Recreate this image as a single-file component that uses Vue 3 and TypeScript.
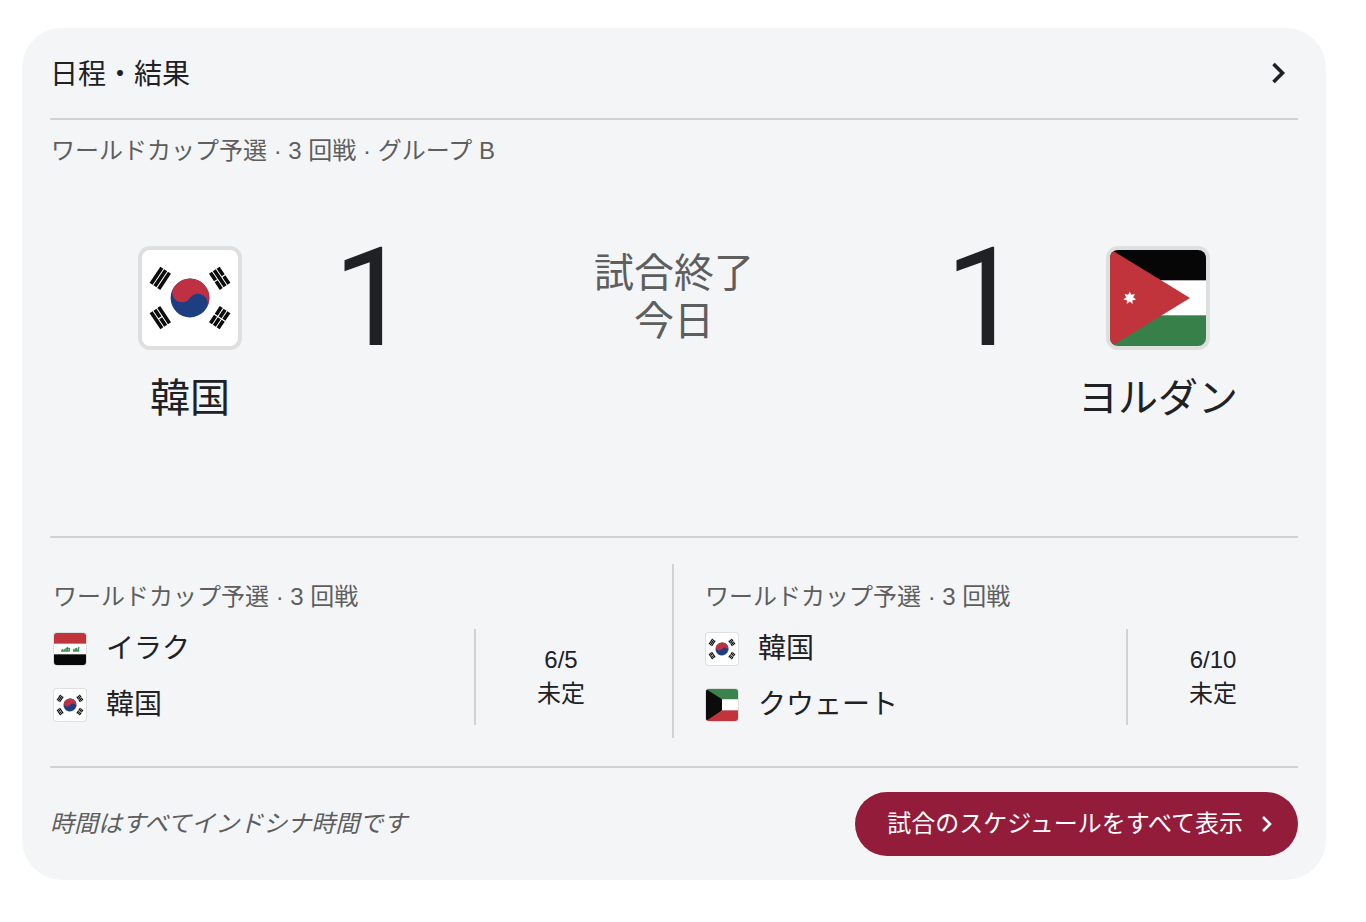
<script setup lang="ts">
import { defineComponent, h } from 'vue'

type Country = 'kr' | 'jo' | 'iq' | 'kw'

interface Team {
  name: string
  flag: Country
}

interface Fixture {
  id: number
  stage: string
  teams: Team[]
  date: string
  time: string
}

const korea: Team = { name: '韓国', flag: 'kr' }
const jordan: Team = { name: 'ヨルダン', flag: 'jo' }

const fixtures: Fixture[] = [
  {
    id: 1,
    stage: 'ワールドカップ予選 · 3 回戦',
    teams: [{ name: 'イラク', flag: 'iq' }, korea],
    date: '6/5',
    time: '未定',
  },
  {
    id: 2,
    stage: 'ワールドカップ予選 · 3 回戦',
    teams: [korea, { name: 'クウェート', flag: 'kw' }],
    date: '6/10',
    time: '未定',
  },
]

const rect = (x: number, y: number, width: number, height: number, fill: string) =>
  h('rect', { x, y, width, height, fill })

// One trigram: three bars, each either whole (1) or split (0).
const trigram = (x: number, y: number, angle: number, bars: number[]) =>
  h(
    'g',
    { transform: `translate(${x} ${y}) rotate(${angle})` },
    bars.flatMap((whole, i) => {
      const top = -6.4 + i * 4.6
      return whole
        ? [rect(-9.7, top, 19.4, 3.6, '#0c0c0c')]
        : [rect(-9.7, top, 9.1, 3.6, '#0c0c0c'), rect(0.6, top, 9.1, 3.6, '#0c0c0c')]
    }),
  )

const starPoints = Array.from({ length: 14 }, (_, i) => {
  const r = i % 2 === 0 ? 6.6 : 3.6
  const a = (i * Math.PI) / 7 - Math.PI / 2
  return `${(19.7 + r * Math.cos(a)).toFixed(2)},${(48 + r * Math.sin(a)).toFixed(2)}`
}).join(' ')

const drawings: Record<Country, () => unknown[]> = {
  kr: () => [
    rect(0, 0, 96, 96, '#fff'),
    h('g', { transform: 'translate(48 48) rotate(33.7)' }, [
      h('circle', { r: 19.4, fill: '#1d3e80' }),
      h('path', {
        d: 'M-19.4 0A19.4 19.4 0 0 1 19.4 0A9.7 9.7 0 0 0 0 0A9.7 9.7 0 0 1 -19.4 0Z',
        fill: '#be3042',
      }),
    ]),
    trigram(18.3, 28.3, -56.3, [1, 1, 1]),
    trigram(77.7, 28.3, 56.3, [0, 1, 0]),
    trigram(18.3, 67.7, 56.3, [1, 0, 1]),
    trigram(77.7, 67.7, -56.3, [0, 0, 0]),
  ],
  jo: () => [
    rect(0, 0, 96, 31, '#060606'),
    rect(0, 30.3, 96, 36, '#fff'),
    rect(0, 65.3, 96, 31, '#37804a'),
    h('path', { d: 'M0 -1L80 48L0 97Z', fill: '#c1343b' }),
    h('polygon', { points: starPoints, fill: '#fff' }),
  ],
  iq: () => [
    rect(0, 0, 96, 33, '#c1343b'),
    rect(0, 32, 96, 33, '#fff'),
    rect(0, 64, 96, 32, '#080808'),
    h('path', {
      d: 'M21 54H47M24 49L28 53M30 52L42 43M36 53L44 46M46 54V44M57 54H76M58 48L62 54M64 54V46M68 54V44M72 54L75 42',
      fill: 'none',
      stroke: '#3f9160',
      'stroke-width': 4,
    }),
  ],
  kw: () => [
    rect(0, 0, 96, 32, '#3a834d'),
    rect(0, 31, 96, 34, '#fff'),
    rect(0, 64, 96, 32, '#c1343b'),
    h('path', { d: 'M0 0L48 31V64L0 96Z', fill: '#0c0c0c' }),
  ],
}

const FlagArt = defineComponent({
  props: { code: { type: String, required: true } },
  setup(props) {
    return () =>
      h(
        'svg',
        { viewBox: '0 0 96 96', width: '100%', height: '100%', 'aria-hidden': 'true' },
        drawings[props.code as Country]() as any,
      )
  },
})
</script>

<template>
  <main class="card">
    <a class="header" href="#schedule">
      <h1 class="title">日程・結果</h1>
      <svg class="header-arrow" viewBox="0 0 36 40" aria-hidden="true">
        <path d="M11.5 11L20.5 20L11.5 29" fill="none" stroke="#202124" stroke-width="3.6" />
      </svg>
    </a>

    <section class="match">
      <p class="stage">ワールドカップ予選 · 3 回戦 · グループ B</p>
      <div class="scoreboard">
        <div class="team">
          <span class="flag flag-large"><FlagArt :code="korea.flag" /></span>
          <span class="team-name">{{ korea.name }}</span>
        </div>
        <span class="score">1</span>
        <div class="status">
          <span>試合終了</span>
          <span>今日</span>
        </div>
        <span class="score">1</span>
        <div class="team">
          <span class="flag flag-large"><FlagArt :code="jordan.flag" /></span>
          <span class="team-name">{{ jordan.name }}</span>
        </div>
      </div>
    </section>

    <section class="fixtures">
      <article v-for="fixture in fixtures" :key="fixture.id" class="fixture">
        <p class="stage">{{ fixture.stage }}</p>
        <div class="fixture-body">
          <ul class="sides">
            <li v-for="team in fixture.teams" :key="team.flag" class="side">
              <span class="flag flag-small"><FlagArt :code="team.flag" /></span>
              <span>{{ team.name }}</span>
            </li>
          </ul>
          <div class="when">
            <span>{{ fixture.date }}</span>
            <span>{{ fixture.time }}</span>
          </div>
        </div>
      </article>
    </section>

    <footer class="footer">
      <p class="note">時間はすべてインドシナ時間です</p>
      <a class="more" href="#all">
        <span>試合のスケジュールをすべて表示</span>
        <svg class="more-arrow" viewBox="0 0 16 20" aria-hidden="true">
          <path d="M4 3L11 10L4 17" fill="none" stroke="#fff" stroke-width="2.6" />
        </svg>
      </a>
    </footer>
  </main>
</template>

<style>
body {
  background: #fff;
}
</style>

<style scoped>
.card {
  box-sizing: border-box;
  margin: 28px 40px 42px 22px;
  padding: 0 28px 24px;
  border-radius: 40px;
  background: #f3f5f7;
  color: #202124;
  font-family: "Liberation Sans", "Noto Sans CJK JP", sans-serif;
}

p,
h1,
ul {
  margin: 0;
  padding: 0;
  list-style: none;
}

.header {
  display: flex;
  align-items: center;
  justify-content: space-between;
  height: 90px;
  border-bottom: 2px solid #d0d2d4;
  color: inherit;
  text-decoration: none;
}

.title {
  padding-top: 3px;
  font-size: 28px;
  font-weight: 400;
  line-height: 36px;
}

.header-arrow {
  width: 36px;
  height: 40px;
}

.match {
  padding: 15px 0 114px;
  border-bottom: 2px solid #d0d2d4;
}

.stage {
  padding-left: 1px;
  color: #5e5e5e;
  font-size: 24px;
  line-height: 32px;
}

.scoreboard {
  display: grid;
  grid-template-columns: 280px 76px 1fr 76px 280px;
  margin-top: 79px;
}

.team {
  display: flex;
  flex-direction: column;
  align-items: center;
  gap: 24px;
}

.team-name {
  font-size: 40px;
  line-height: 48px;
}

.flag {
  display: block;
  overflow: hidden;
  background: #dfdfdf;
}

.flag :deep(svg) {
  display: block;
}

.flag-large {
  width: 96px;
  height: 96px;
  padding: 4px;
  border-radius: 12px;
}

.flag-large :deep(svg) {
  border-radius: 8px;
}

.flag-small {
  width: 32px;
  height: 32px;
  padding: 1px;
  border-radius: 4px;
}

.flag-small :deep(svg) {
  border-radius: 3px;
}

.score {
  padding: 2px 0 0 3px;
  font-family: Roboto, "Liberation Sans", sans-serif;
  font-size: 138px;
  line-height: 100px;
}

.status {
  display: flex;
  flex-direction: column;
  align-items: center;
  padding-top: 3px;
  color: #5e5e5e;
  font-size: 40px;
  line-height: 48px;
}

.fixtures {
  display: grid;
  grid-template-columns: 1fr 1fr;
  padding: 26px 0 28px;
  border-bottom: 2px solid #d0d2d4;
}

.fixture {
  padding: 17px 0 13px;
}

.fixture:first-child {
  padding-right: 26px;
  padding-left: 2px;
  border-right: 2px solid #d0d2d4;
}

.fixture:last-child {
  padding-left: 30px;
}

.fixture-body {
  display: flex;
  align-items: center;
  margin-top: 16px;
}

.sides {
  flex: 1;
  display: grid;
  gap: 20px;
  padding-left: 1px;
}

.side {
  display: flex;
  align-items: center;
  gap: 19px;
  font-size: 28px;
  line-height: 36px;
}

.when {
  box-sizing: border-box;
  display: flex;
  flex-direction: column;
  align-items: center;
  justify-content: center;
  width: 172px;
  height: 96px;
  border-left: 2px solid #d0d2d4;
  font-size: 24px;
  line-height: 34px;
}

.footer {
  display: flex;
  align-items: center;
  justify-content: space-between;
  padding-top: 24px;
}

.note {
  color: #5e5e5e;
  font-size: 24px;
  font-style: italic;
  line-height: 32px;
}

.more {
  display: flex;
  align-items: center;
  gap: 16px;
  height: 64px;
  padding: 0 23px 0 32px;
  border-radius: 32px;
  background: #931c3b;
  color: #fff;
  font-size: 24px;
  line-height: 32px;
  text-decoration: none;
}

.more-arrow {
  width: 16px;
  height: 20px;
}
</style>
